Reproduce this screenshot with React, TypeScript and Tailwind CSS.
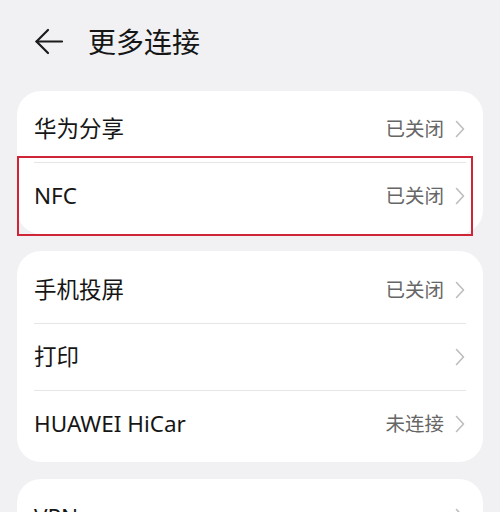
import React from "react";

const font = { fontFamily: '"Noto Sans", "Noto Sans CJK SC", sans-serif' };

function Chevron() {
  return (
    <svg width="10" height="18" viewBox="0 0 10 18" className="ml-[11px] shrink-0">
      <path d="M1.5 1.5 L8.5 9 L1.5 16.5" fill="none" stroke="#bdbdbd" strokeWidth="1.6" strokeLinecap="round" strokeLinejoin="round" />
    </svg>
  );
}

function Row({ label, value }: { label: string; value?: string }) {
  return (
    <div className="h-[66px] px-[17px] flex items-center justify-between">
      <span className="text-[22.5px] text-[#161616] leading-none">{label}</span>
      <div className="flex items-center pr-[1px]">
        {value && <span className="text-[19.5px] text-[#666666] leading-none">{value}</span>}
        <Chevron />
      </div>
    </div>
  );
}

function Divider() {
  return <div className="mx-[17px] h-px bg-[#e6e6e6]" />;
}

export default function App() {
  return (
    <div className="relative w-[500px] h-[512px] overflow-hidden bg-[#f1f1f3]" style={font}>
      <div className="h-[84px] flex items-center pl-[34px]">
        <svg width="30" height="28" viewBox="0 0 30 28">
          <path d="M2.5 13.5 H28" stroke="#1b1b1b" strokeWidth="2.2" strokeLinecap="round" fill="none" />
          <path d="M14 2 L2.5 13.5 L14 25" stroke="#1b1b1b" strokeWidth="2.2" strokeLinecap="round" strokeLinejoin="round" fill="none" />
        </svg>
        <span className="ml-[24px] text-[28px] text-[#161616] leading-none">更多连接</span>
      </div>
      <div className="mt-[7px] px-[17px] flex flex-col gap-[17px]">
        <div className="bg-white rounded-[24px] py-[5px]">
          <Row label="华为分享" value="已关闭" />
          <Divider />
          <Row label="NFC" value="已关闭" />
        </div>
        <div className="bg-white rounded-[24px] pt-[6px] pb-[5px]">
          <Row label="手机投屏" value="已关闭" />
          <Divider />
          <Row label="打印" />
          <Divider />
          <Row label="HUAWEI HiCar" value="未连接" />
        </div>
        <div className="bg-white rounded-[24px] py-[5px]">
          <Row label="VPN" />
        </div>
      </div>
      <div className="absolute left-[17px] top-[156px] w-[456px] h-[80px] border-2 border-[#cf2536]" />
    </div>
  );
}
